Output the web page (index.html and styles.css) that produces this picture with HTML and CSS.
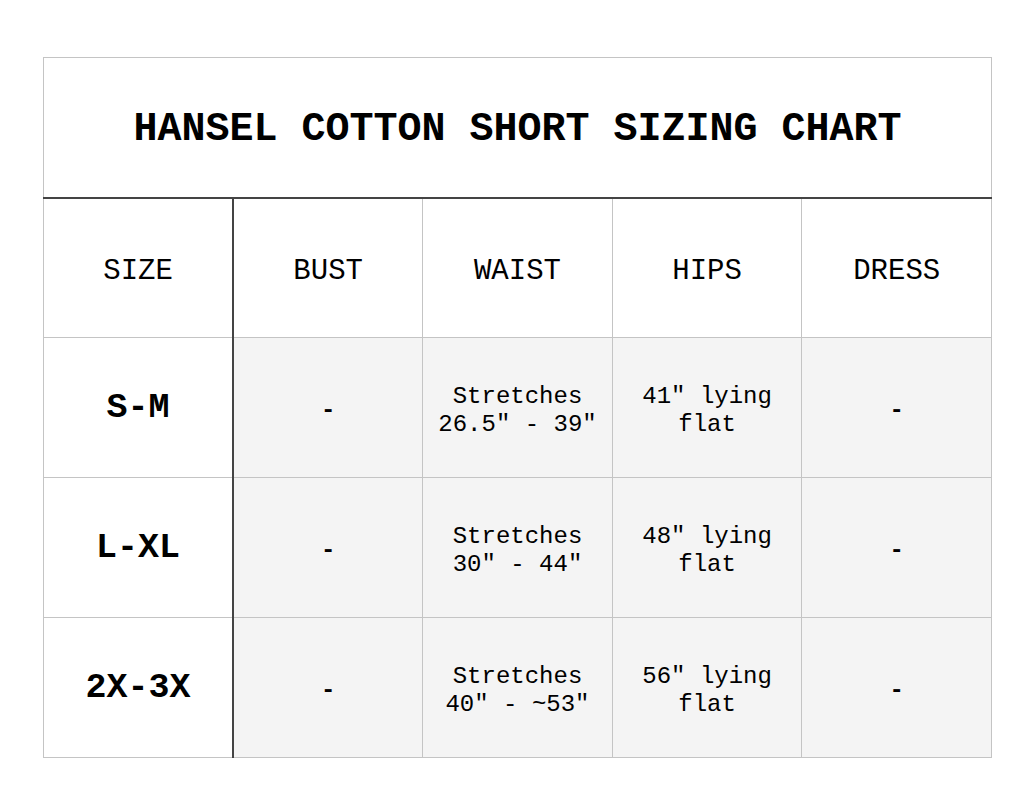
FILE: index.html
```html
<!DOCTYPE html>
<html>
<head>
<meta charset="utf-8">
<link rel="stylesheet" href="styles.css">
</head>
<body>
<div class="page">
<table class="chart">
  <colgroup><col><col><col><col><col></colgroup>
  <tr class="title-row"><th colspan="5" class="title">HANSEL COTTON SHORT SIZING CHART</th></tr>
  <tr class="head-row">
    <th class="size-col">SIZE</th><th>BUST</th><th>WAIST</th><th>HIPS</th><th>DRESS</th>
  </tr>
  <tr class="body-row">
    <td class="size-col size">S-M</td><td class="dash">-</td><td>Stretches<br>26.5″ - 39″</td><td>41″ lying<br>flat</td><td class="dash">-</td>
  </tr>
  <tr class="body-row">
    <td class="size-col size">L-XL</td><td class="dash">-</td><td>Stretches<br>30″ - 44″</td><td>48″ lying<br>flat</td><td class="dash">-</td>
  </tr>
  <tr class="body-row">
    <td class="size-col size">2X-3X</td><td class="dash">-</td><td>Stretches<br>40″ - ~53″</td><td>56″ lying<br>flat</td><td class="dash">-</td>
  </tr>
</table>
</div>
</body>
</html>
```
FILE: styles.css
```css
html, body {
  margin: 0;
  padding: 0;
  background: #fff;
}
.page {
  padding: 57px 0 0 43px;
}
.chart {
  border-collapse: collapse;
  table-layout: fixed;
  width: 949px;
  font-family: "Liberation Mono", "Courier New", monospace;
  color: #000;
}
.chart th, .chart td {
  border: 1px solid #c4c4c4;
  text-align: center;
  vertical-align: middle;
  padding: 0;
}
.title-row th {
  height: 135px;
  font-size: 40px;
  font-weight: bold;
  border-bottom: 2px solid #444;
  padding-top: 4px;
}
.head-row th {
  height: 132px;
  font-size: 29px;
  font-weight: normal;
  padding-top: 6px;
}
.body-row td {
  height: 133px;
  background: #f4f4f4;
  font-size: 24px;
  line-height: 28px;
  padding-top: 6px;
}
.chart .size-col {
  border-right: 2px solid #444;
  background: #fff;
}
.body-row td.size {
  font-size: 35px;
  font-weight: bold;
  padding-top: 0;
}
.body-row td.dash {
  font-weight: bold;
}
```
